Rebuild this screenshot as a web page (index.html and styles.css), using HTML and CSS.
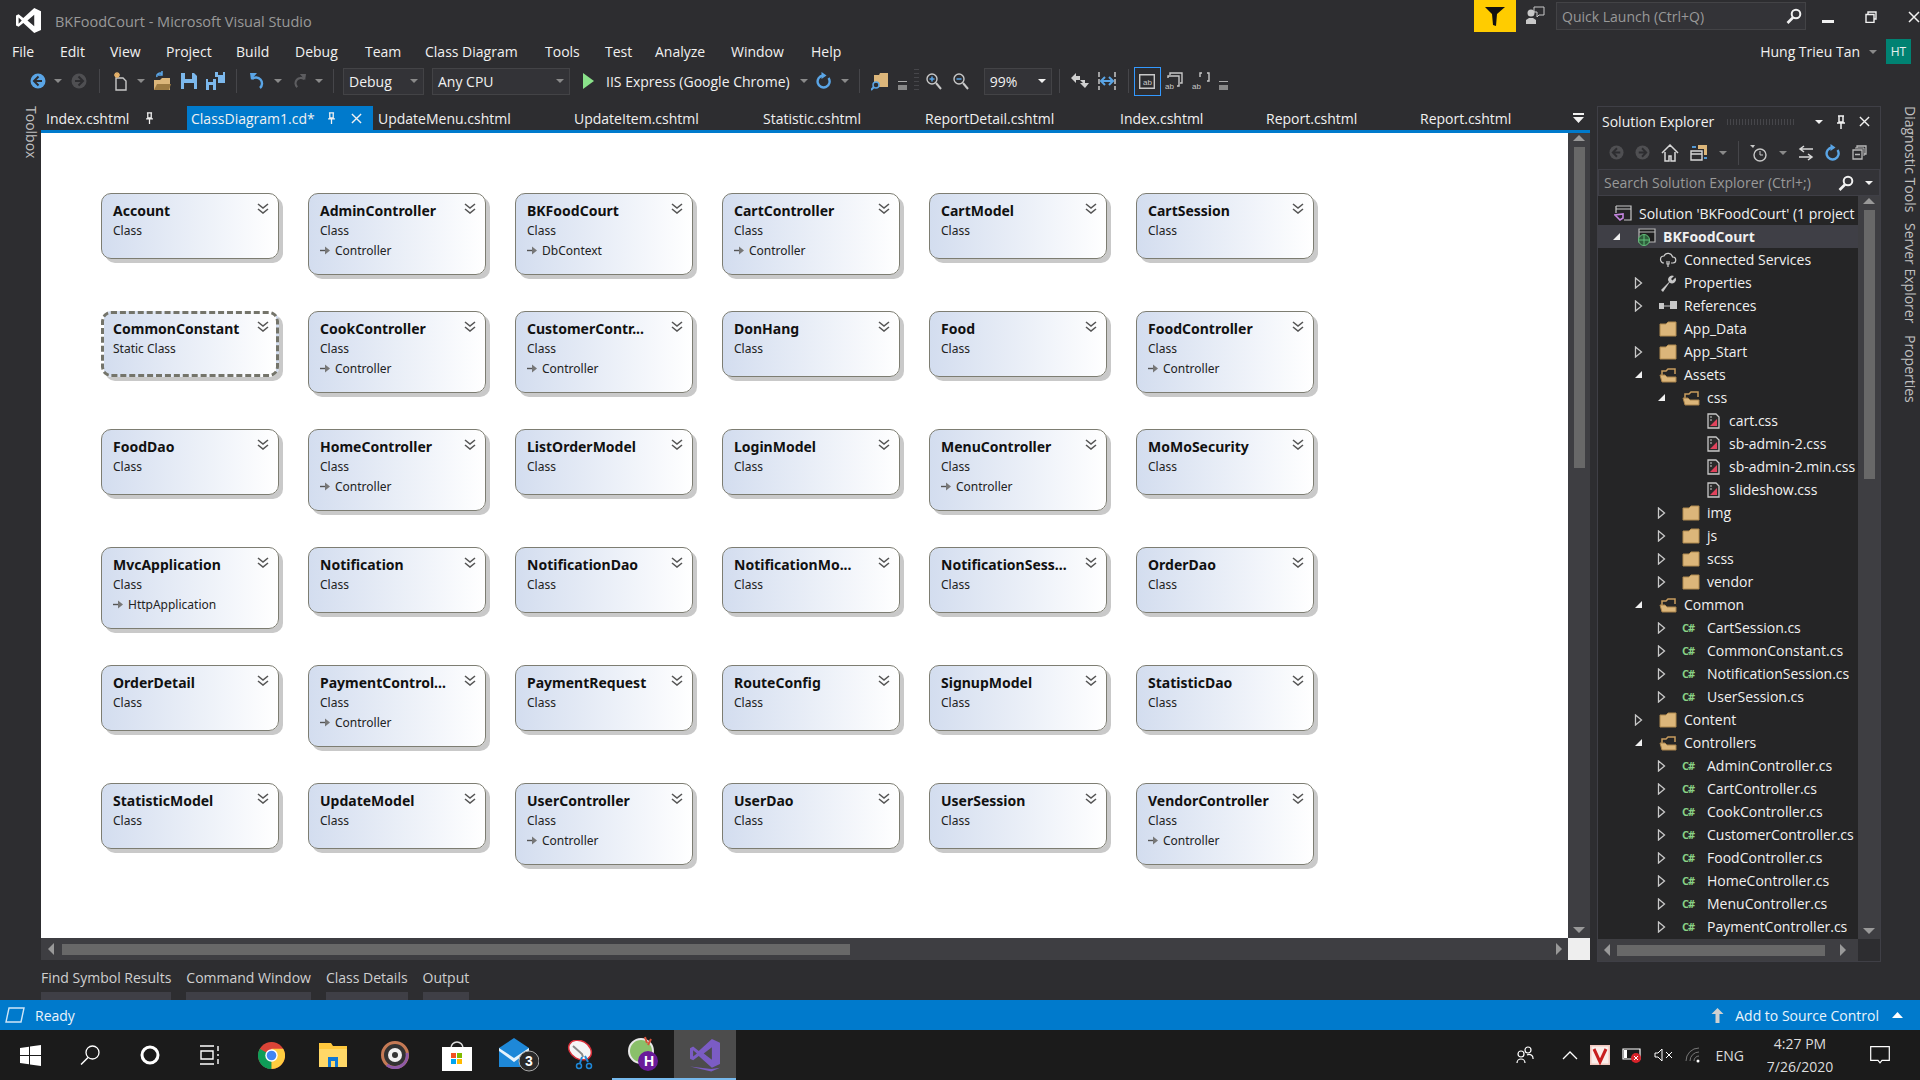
FILE: index.html
```html
<!DOCTYPE html>
<html lang="en">

<head>
    <meta charset="UTF-8">
    <meta name="viewport" content="width=device-width, initial-scale=1.0">
    <title>BKFoodCourt - Microsoft Visual Studio</title>
    <link rel="stylesheet" href="styles.css">
</head>

<body>
    <!-- icon sheet -->
    <svg class="sheet" xmlns="http://www.w3.org/2000/svg">
        <symbol id="vs" viewBox="0 0 24 24"><path fill-rule="evenodd" d="M17.5 0L24 3v18l-6.500 3L7 14.500 2.500 18 0 16.700V7.300L2.500 6 7 9.500zM17.500 6.500L11 12l6.500 5.500zM2.500 9v6l3-3z"/></symbol>
        <symbol id="chev" viewBox="0 0 12 11"><path d="M1 1l5 4 5-4M1 6l5 4 5-4" fill="none" stroke="#555" stroke-width="1.600"/></symbol>
        <symbol id="inh" viewBox="0 0 11 9"><path d="M0 4.500h5" stroke="#555" stroke-width="1.400"/><path d="M5 .5l5 4-5 4z" fill="#777"/></symbol>
        <symbol id="tri-open" viewBox="0 0 8 12"><path d="M1 1l6 5-6 5z" fill="none" stroke="#c8c8c8" stroke-width="1.300"/></symbol>
        <symbol id="tri-down" viewBox="0 0 9 9"><path d="M8 1v7H1z" fill="#f1f1f1"/></symbol>
        <symbol id="folder" viewBox="0 0 18 16"><path d="M1 3h6l2-2h8v14H1z" fill="#dcb67a" stroke="#b08a4e"/></symbol>
        <symbol id="folder-open" viewBox="0 0 18 16"><path d="M3 14V4h4l2-2h7v5" fill="none" stroke="#c79c5e" stroke-width="1.500"/><path d="M1 8h5l2 2h9v5H3z" fill="#dcb67a" stroke="#a8824a"/></symbol>
        <symbol id="css" viewBox="0 0 13 16"><path d="M1 1h8l3 3v11H1z" fill="#2a2a2a" stroke="#c8c8c8" stroke-width="1.300"/><path d="M3 13l7-7v7z" fill="#e0435c"/><path d="M3 4h2M3 7h2" stroke="#c8c8c8"/></symbol>
        <symbol id="back" viewBox="0 0 16 16"><circle cx="8" cy="8" r="7.500" fill="currentColor"/><path d="M8.500 3.500L4 8l4.500 4.500M4.500 8H12" fill="none" stroke="#2d2d30" stroke-width="2"/></symbol>
        <symbol id="fwd" viewBox="0 0 16 16"><circle cx="8" cy="8" r="7.500" fill="currentColor"/><path d="M7.500 3.500L12 8l-4.500 4.500M11.500 8H4" fill="none" stroke="#2d2d30" stroke-width="2"/></symbol>
        <symbol id="refresh" viewBox="0 0 16 18"><path d="M7 3.500a6 6 0 1 0 5.500 2.500" fill="none" stroke="#5aa5e6" stroke-width="2.400"/><path d="M5.500 0l5 3.500-5 3.500z" fill="#5aa5e6"/></symbol>
        <symbol id="search" viewBox="0 0 16 16"><circle cx="10" cy="6" r="4.300" fill="none" stroke="#f1f1f1" stroke-width="2"/><path d="M7 9.500L1.500 15" stroke="#f1f1f1" stroke-width="2.600"/></symbol>
        <symbol id="pin" viewBox="0 0 10 14"><path d="M2 1h6M3 1v6h4V1M1 8h8M5 8v6" fill="none" stroke="#f1f1f1" stroke-width="1.500"/></symbol>
        <symbol id="x" viewBox="0 0 12 12"><path d="M1 1l10 10M11 1L1 11" stroke="#f1f1f1" stroke-width="1.500"/></symbol>
    </svg>

    <div class="ide">
        <header class="titlebar">
            <svg class="logo"><use href="#vs" fill="#fff"/></svg>
            <span class="app-title">BKFoodCourt - Microsoft Visual Studio</span>
            <div class="filter">
                <svg width="22" height="22" viewBox="0 0 22 22"><path d="M1 2h20L13 9l-1 12-3-1-1-11z" fill="#111"/></svg>
            </div>
            <svg class="feedback" width="20" height="20" viewBox="0 0 20 20"><circle cx="6" cy="7" r="3.500" fill="#c8c8c8"/><path d="M1 18v-4l3-2h4l3 2v4z" fill="#c8c8c8"/><path d="M9 1h10v8h-5l-2 2V6H9z" fill="none" stroke="#c8c8c8"/></svg>
            <div class="quick">
                <span>Quick Launch (Ctrl+Q)</span>
                <svg width="16" height="16"><use href="#search"/></svg>
            </div>
            <div class="winbtns">
                <svg width="12" height="12" viewBox="0 0 12 12"><path d="M0 9h12v3H0z" fill="#f1f1f1"/></svg>
                <svg width="12" height="12" viewBox="0 0 12 12"><path d="M3 3V1h8v7H9M1 3.500h8v8H1z" fill="none" stroke="#f1f1f1" stroke-width="1.400"/></svg>
                <svg width="12" height="12"><use href="#x"/></svg>
            </div>
        </header>

        <nav class="menubar">
            <ul class="menu">
                <li>File</li>
                <li>Edit</li>
                <li>View</li>
                <li>Project</li>
                <li>Build</li>
                <li>Debug</li>
                <li>Team</li>
                <li>Class Diagram</li>
                <li>Tools</li>
                <li>Test</li>
                <li>Analyze</li>
                <li>Window</li>
                <li>Help</li>
            </ul>
            <div class="user">
                <span>Hung Trieu Tan</span>
                <i class="drop"></i>
                <b class="avatar">HT</b>
            </div>
        </nav>

        <div class="toolbar">
            <span class="tool"><svg class="blue" width="16" height="16"><use href="#back"/></svg></span>
            <i class="drop slot"></i>
            <span class="tool"><svg class="dim" width="16" height="16"><use href="#fwd"/></svg></span>
            <i class="sep"></i>
            <span class="tool"><svg width="16" height="20" viewBox="0 0 16 20"><path d="M3 7h7l3 3v9H3z" fill="none" stroke="#c8c8c8" stroke-width="1.400"/><path d="M4 1v6M1 4h6M2 2l4 4M6 2L2 6" stroke="#e8b36a" stroke-width="1.300"/></svg></span>
            <i class="drop slot"></i>
            <span class="tool"><svg width="18" height="20" viewBox="0 0 18 20"><path d="M1 19V9h6l2-2h8v12z" fill="#dcb67a"/><path d="M1 19l3-6h14l-2 6z" fill="#9c7a42"/><path d="M4 6a3 3 0 0 1 5-3M9 0v4H5" fill="none" stroke="#5aa5e6" stroke-width="1.500"/></svg></span>
            <span class="tool"><svg width="16" height="16" viewBox="0 0 16 16"><path d="M0 0h13l3 3v13H0z" fill="#7cb8ec"/><path d="M4 0h7v6H4z" fill="#2d2d30"/><path d="M3 10h10v6H3z" fill="#2d2d30"/></svg></span>
            <span class="tool"><svg width="19" height="18" viewBox="0 0 19 18"><path d="M0 7h10v11H0z" fill="#7cb8ec"/><path d="M2 7h5v3H2z" fill="#2d2d30"/><path d="M3 13h4v5H3z" fill="#2d2d30"/><path d="M9 0h10v11h-7V5H9z" fill="#7cb8ec"/><path d="M12 0h5v3h-5z" fill="#2d2d30"/></svg></span>
            <i class="sep"></i>
            <span class="tool"><svg width="16" height="18" viewBox="0 0 16 18"><path d="M2 7a6 6 0 1 1 8 9" fill="none" stroke="#5aa5e6" stroke-width="2.400"/><path d="M0 1l7 0-6 7z" fill="#5aa5e6"/></svg></span>
            <i class="drop slot"></i>
            <span class="tool"><svg class="dim-icon" width="14" height="18" viewBox="0 0 16 18"><path d="M14 7a6 6 0 1 0-8 9" fill="none" stroke="#5d5d60" stroke-width="2.400"/><path d="M16 1H9l6 7z" fill="#5d5d60"/></svg></span>
            <i class="drop slot"></i>
            <i class="sep"></i>
            <div class="combo debug"><span>Debug</span><i class="drop"></i></div>
            <div class="combo cpu"><span>Any CPU</span><i class="drop"></i></div>
            <svg class="play" width="11" height="16" viewBox="0 0 11 16"><path d="M0 0l11 8-11 8z" fill="#8ae28a"/></svg>
            <span class="run">IIS Express (Google Chrome)</span>
            <i class="drop slot"></i>
            <span class="tool"><svg width="16" height="18"><use href="#refresh"/></svg></span>
            <i class="drop slot"></i>
            <i class="sep"></i>
            <span class="tool"><svg width="18" height="19" viewBox="0 0 18 19"><path d="M3 12V3h5l1-2h8v14H8z" fill="#dcb67a"/><circle cx="5" cy="13" r="3" fill="#2d2d30" stroke="#5aa5e6" stroke-width="1.500"/><path d="M3 15l-3 3" stroke="#5aa5e6" stroke-width="2"/></svg></span>
            <i class="overflow"></i>
            <span class="grip"></span>
            <span class="tool"><svg width="16" height="17" viewBox="0 0 16 17"><circle cx="6" cy="6" r="5" fill="none" stroke="#c8c8c8" stroke-width="1.400"/><path d="M3.500 6h5M6 3.500v5" stroke="#5aa5e6" stroke-width="1.500"/><path d="M10 10l5 6" stroke="#c8c8c8" stroke-width="2"/></svg></span>
            <span class="tool"><svg width="16" height="17" viewBox="0 0 16 17"><circle cx="6" cy="6" r="5" fill="none" stroke="#c8c8c8" stroke-width="1.400"/><path d="M3.500 6h5" stroke="#5aa5e6" stroke-width="1.500"/><path d="M10 10l5 6" stroke="#c8c8c8" stroke-width="2"/></svg></span>
            <div class="combo zoom"><span>99%</span><i class="drop light"></i></div>
            <i class="sep"></i>
            <span class="tool"><svg width="18" height="18" viewBox="0 0 18 18"><path d="M0 6l5-5v3h4v4H5v3zM9 8h5v3h4l-4 5-5-5h3z" fill="#d0d0d0"/></svg></span>
            <span class="tool"><svg width="18" height="18" viewBox="0 0 18 18"><path d="M1 0v18M17 0v18" stroke="#c8c8c8" stroke-width="1.500" stroke-dasharray="5 2"/><path d="M4 9h10" stroke="#5aa5e6" stroke-width="2"/><path d="M7 5L3 9l4 4M11 5l4 4-4 4" fill="none" stroke="#5aa5e6" stroke-width="2"/></svg></span>
            <i class="sep"></i>
            <span class="tool-on"><svg width="16" height="15" viewBox="0 0 16 15"><path d="M.7.7h14.600v13.600H.7z" fill="none" stroke="#c8c8c8" stroke-width="1.400"/><text x="4" y="11" class="ab">ab</text></svg></span>
            <span class="tool"><svg width="18" height="18" viewBox="0 0 18 18"><path d="M5 3V1h12v10h-2M3 6V4h11v10h-2" fill="none" stroke="#c8c8c8" stroke-width="1.400"/><text x="0" y="17" class="ab">ab</text></svg></span>
            <span class="tool"><svg width="18" height="18" viewBox="0 0 18 18"><path d="M8 5V1h2M15 1h2v8h-2" fill="none" stroke="#c8c8c8" stroke-width="1.400"/><text x="0" y="17" class="ab">ab</text></svg></span>
            <i class="overflow"></i>
        </div>

        <main class="workspace">
            <aside class="rail left-rail">
                <span class="side-tab">Toolbox</span>
            </aside>

            <section class="center">
                <div class="tabs">
                    <div class="tab">Index.cshtml<svg class="tab-pin" width="9" height="12"><use href="#pin"/></svg></div>
                    <div class="tab active">ClassDiagram1.cd*<svg class="tab-pin" width="9" height="12"><use href="#pin"/></svg><svg width="11" height="11"><use href="#x"/></svg></div>
                    <div class="tab">UpdateMenu.cshtml</div>
                    <div class="tab">UpdateItem.cshtml</div>
                    <div class="tab">Statistic.cshtml</div>
                    <div class="tab">ReportDetail.cshtml</div>
                    <div class="tab">Index.cshtml</div>
                    <div class="tab">Report.cshtml</div>
                    <div class="tab">Report.cshtml</div>
                    <svg class="tabs-more" width="11" height="10" viewBox="0 0 11 10"><path d="M0 0h11v2H0zM0 4h11L5.500 10z" fill="#f1f1f1"/></svg>
                </div>

                <div class="editor">
                    <div class="canvas">
                        <div class="card short"><h4>Account</h4><p>Class</p><svg class="chev"><use href="#chev"/></svg></div>
                        <div class="card"><h4>AdminController</h4><p>Class</p><p class="base"><svg><use href="#inh"/></svg>Controller</p><svg class="chev"><use href="#chev"/></svg></div>
                        <div class="card"><h4>BKFoodCourt</h4><p>Class</p><p class="base"><svg><use href="#inh"/></svg>DbContext</p><svg class="chev"><use href="#chev"/></svg></div>
                        <div class="card"><h4>CartController</h4><p>Class</p><p class="base"><svg><use href="#inh"/></svg>Controller</p><svg class="chev"><use href="#chev"/></svg></div>
                        <div class="card short"><h4>CartModel</h4><p>Class</p><svg class="chev"><use href="#chev"/></svg></div>
                        <div class="card short"><h4>CartSession</h4><p>Class</p><svg class="chev"><use href="#chev"/></svg></div>

                        <div class="card short picked"><h4>CommonConstant</h4><p>Static Class</p><svg class="chev"><use href="#chev"/></svg></div>
                        <div class="card"><h4>CookController</h4><p>Class</p><p class="base"><svg><use href="#inh"/></svg>Controller</p><svg class="chev"><use href="#chev"/></svg></div>
                        <div class="card"><h4>CustomerContr...</h4><p>Class</p><p class="base"><svg><use href="#inh"/></svg>Controller</p><svg class="chev"><use href="#chev"/></svg></div>
                        <div class="card short"><h4>DonHang</h4><p>Class</p><svg class="chev"><use href="#chev"/></svg></div>
                        <div class="card short"><h4>Food</h4><p>Class</p><svg class="chev"><use href="#chev"/></svg></div>
                        <div class="card"><h4>FoodController</h4><p>Class</p><p class="base"><svg><use href="#inh"/></svg>Controller</p><svg class="chev"><use href="#chev"/></svg></div>

                        <div class="card short"><h4>FoodDao</h4><p>Class</p><svg class="chev"><use href="#chev"/></svg></div>
                        <div class="card"><h4>HomeController</h4><p>Class</p><p class="base"><svg><use href="#inh"/></svg>Controller</p><svg class="chev"><use href="#chev"/></svg></div>
                        <div class="card short"><h4>ListOrderModel</h4><p>Class</p><svg class="chev"><use href="#chev"/></svg></div>
                        <div class="card short"><h4>LoginModel</h4><p>Class</p><svg class="chev"><use href="#chev"/></svg></div>
                        <div class="card"><h4>MenuController</h4><p>Class</p><p class="base"><svg><use href="#inh"/></svg>Controller</p><svg class="chev"><use href="#chev"/></svg></div>
                        <div class="card short"><h4>MoMoSecurity</h4><p>Class</p><svg class="chev"><use href="#chev"/></svg></div>

                        <div class="card"><h4>MvcApplication</h4><p>Class</p><p class="base"><svg><use href="#inh"/></svg>HttpApplication</p><svg class="chev"><use href="#chev"/></svg></div>
                        <div class="card short"><h4>Notification</h4><p>Class</p><svg class="chev"><use href="#chev"/></svg></div>
                        <div class="card short"><h4>NotificationDao</h4><p>Class</p><svg class="chev"><use href="#chev"/></svg></div>
                        <div class="card short"><h4>NotificationMo...</h4><p>Class</p><svg class="chev"><use href="#chev"/></svg></div>
                        <div class="card short"><h4>NotificationSess...</h4><p>Class</p><svg class="chev"><use href="#chev"/></svg></div>
                        <div class="card short"><h4>OrderDao</h4><p>Class</p><svg class="chev"><use href="#chev"/></svg></div>

                        <div class="card short"><h4>OrderDetail</h4><p>Class</p><svg class="chev"><use href="#chev"/></svg></div>
                        <div class="card"><h4>PaymentControl...</h4><p>Class</p><p class="base"><svg><use href="#inh"/></svg>Controller</p><svg class="chev"><use href="#chev"/></svg></div>
                        <div class="card short"><h4>PaymentRequest</h4><p>Class</p><svg class="chev"><use href="#chev"/></svg></div>
                        <div class="card short"><h4>RouteConfig</h4><p>Class</p><svg class="chev"><use href="#chev"/></svg></div>
                        <div class="card short"><h4>SignupModel</h4><p>Class</p><svg class="chev"><use href="#chev"/></svg></div>
                        <div class="card short"><h4>StatisticDao</h4><p>Class</p><svg class="chev"><use href="#chev"/></svg></div>

                        <div class="card short"><h4>StatisticModel</h4><p>Class</p><svg class="chev"><use href="#chev"/></svg></div>
                        <div class="card short"><h4>UpdateModel</h4><p>Class</p><svg class="chev"><use href="#chev"/></svg></div>
                        <div class="card"><h4>UserController</h4><p>Class</p><p class="base"><svg><use href="#inh"/></svg>Controller</p><svg class="chev"><use href="#chev"/></svg></div>
                        <div class="card short"><h4>UserDao</h4><p>Class</p><svg class="chev"><use href="#chev"/></svg></div>
                        <div class="card short"><h4>UserSession</h4><p>Class</p><svg class="chev"><use href="#chev"/></svg></div>
                        <div class="card"><h4>VendorController</h4><p>Class</p><p class="base"><svg><use href="#inh"/></svg>Controller</p><svg class="chev"><use href="#chev"/></svg></div>
                    </div>
                    <div class="vscroll editor-v">
                        <i class="arr-up"></i>
                        <span class="thumb"></span>
                        <i class="arr-down"></i>
                    </div>
                </div>

                <div class="hscroll editor-h">
                    <i class="arr-left"></i>
                    <span class="hthumb"></span>
                    <i class="arr-right"></i>
                    <span class="corner"></span>
                </div>

                <div class="bottom-tabs">
                    <div class="btab">Find Symbol Results</div>
                    <div class="btab">Command Window</div>
                    <div class="btab">Class Details</div>
                    <div class="btab">Output</div>
                </div>
            </section>

            <section class="explorer-wrap">
                <div class="explorer">
                    <div class="ex-title">
                        <span>Solution Explorer</span>
                        <span class="ex-grip"></span>
                        <i class="drop light"></i>
                        <svg width="10" height="14"><use href="#pin"/></svg>
                        <svg width="11" height="11"><use href="#x"/></svg>
                    </div>
                    <div class="ex-tools">
                        <svg class="dim" width="15" height="15"><use href="#back"/></svg>
                        <svg class="dim" width="15" height="15"><use href="#fwd"/></svg>
                        <svg width="18" height="18" viewBox="0 0 18 18"><path d="M1 9l8-8 8 8M4 8v9h4v-5h2v5h4V8" fill="none" stroke="#d8d8d8" stroke-width="1.500"/></svg>
                        <svg width="18" height="18" viewBox="0 0 18 18"><path d="M1 7h11v9H1zM1 10h11" fill="none" stroke="#d8d8d8" stroke-width="1.400"/><path d="M8 1h9v10h-3V5H8z" fill="#dcb67a"/><path d="M2 3h4" stroke="#5aa5e6" stroke-width="1.800"/><path d="M14 14h3" stroke="#5aa5e6" stroke-width="1.800"/></svg>
                        <i class="drop"></i>
                        <i class="sep"></i>
                        <svg width="18" height="18" viewBox="0 0 18 18"><circle cx="10" cy="11" r="6" fill="none" stroke="#c8c8c8" stroke-width="1.400"/><path d="M10 7v4h3" fill="none" stroke="#c8c8c8"/><path d="M0 1h5L3 4z" fill="#c8c8c8"/></svg>
                        <i class="drop"></i>
                        <svg width="16" height="16" viewBox="0 0 16 16"><path d="M15 4H3M6 1L2 4l4 3M1 12h12M10 9l4 3-4 3" fill="none" stroke="#d8d8d8" stroke-width="1.500"/></svg>
                        <svg width="16" height="18"><use href="#refresh"/></svg>
                        <svg width="15" height="15" viewBox="0 0 15 15"><path d="M5 3V1h9v8h-2M1 5h9v9H1zM3 9.500h5" fill="none" stroke="#b8b8b8" stroke-width="1.300"/><path d="M3 3h9v8" fill="none" stroke="#b8b8b8"/></svg>
                    </div>
                    <div class="ex-search">
                        <span>Search Solution Explorer (Ctrl+;)</span>
                        <svg width="16" height="16"><use href="#search"/></svg>
                        <i class="drop light"></i>
                    </div>
                    <div class="ex-body">
                        <div class="tree">
                            <div class="row sol"><svg class="ico" width="18" height="18" viewBox="0 0 18 18"><path d="M2 1h15v14H10M2 1v7M2 4h15" fill="none" stroke="#c8c8c8" stroke-width="1.200"/><path d="M1 10l5 5 3-2v-4z" fill="none" stroke="#c586e0" stroke-width="1.600"/></svg><span>Solution 'BKFoodCourt' (1 project</span></div>
                            <div class="row proj"><svg class="tri" width="9" height="9"><use href="#tri-down"/></svg><svg class="ico" width="19" height="18" viewBox="0 0 19 18"><path d="M2 1h16v13H2z" fill="#1e1e1e" stroke="#b8b8b8" stroke-width="1.200"/><path d="M2 4h16" stroke="#b8b8b8"/><circle cx="7" cy="12" r="5.500" fill="#2d5d3a" stroke="#63c07a"/><path d="M2 12h10M7 7v10" stroke="#63c07a"/></svg><b>BKFoodCourt</b></div>
                            <div class="row lv1 noarrow"><svg class="ico" width="18" height="16" viewBox="0 0 18 16"><path d="M5 11a3.500 3.500 0 0 1 0-7 4.500 4.500 0 0 1 8.500 1A3 3 0 0 1 14 11h-2M8 9v3h2V9M9 12v3" fill="none" stroke="#d0d0d0" stroke-width="1.200"/></svg><span>Connected Services</span></div>
                            <div class="row lv1"><svg class="tri" width="8" height="12"><use href="#tri-open"/></svg><svg class="ico" width="18" height="18" viewBox="0 0 18 18"><path d="M2 16L10 8a4 4 0 0 1 5-6l-3 3 1.500 1.500 3-3a4 4 0 0 1-6 5L4 18z" fill="#c8c8c8"/></svg><span>Properties</span></div>
                            <div class="row lv1"><svg class="tri" width="8" height="12"><use href="#tri-open"/></svg><svg class="ico" width="18" height="10" viewBox="0 0 18 10"><path d="M0 2h5v6H0zM11 0h7v8h-7z" fill="#c8c8c8"/><path d="M5 5h6" stroke="#c8c8c8"/></svg><span>References</span></div>
                            <div class="row lv1 noarrow"><svg class="ico" width="18" height="16"><use href="#folder"/></svg><span>App_Data</span></div>
                            <div class="row lv1"><svg class="tri" width="8" height="12"><use href="#tri-open"/></svg><svg class="ico" width="18" height="16"><use href="#folder"/></svg><span>App_Start</span></div>
                            <div class="row lv1"><svg class="tri" width="9" height="9"><use href="#tri-down"/></svg><svg class="ico" width="18" height="16"><use href="#folder-open"/></svg><span>Assets</span></div>
                            <div class="row lv2"><svg class="tri" width="9" height="9"><use href="#tri-down"/></svg><svg class="ico" width="18" height="16"><use href="#folder-open"/></svg><span>css</span></div>
                            <div class="row lv3"><svg class="ico" width="13" height="16"><use href="#css"/></svg><span>cart.css</span></div>
                            <div class="row lv3"><svg class="ico" width="13" height="16"><use href="#css"/></svg><span>sb-admin-2.css</span></div>
                            <div class="row lv3"><svg class="ico" width="13" height="16"><use href="#css"/></svg><span>sb-admin-2.min.css</span></div>
                            <div class="row lv3"><svg class="ico" width="13" height="16"><use href="#css"/></svg><span>slideshow.css</span></div>
                            <div class="row lv2"><svg class="tri" width="8" height="12"><use href="#tri-open"/></svg><svg class="ico" width="18" height="16"><use href="#folder"/></svg><span>img</span></div>
                            <div class="row lv2"><svg class="tri" width="8" height="12"><use href="#tri-open"/></svg><svg class="ico" width="18" height="16"><use href="#folder"/></svg><span>js</span></div>
                            <div class="row lv2"><svg class="tri" width="8" height="12"><use href="#tri-open"/></svg><svg class="ico" width="18" height="16"><use href="#folder"/></svg><span>scss</span></div>
                            <div class="row lv2"><svg class="tri" width="8" height="12"><use href="#tri-open"/></svg><svg class="ico" width="18" height="16"><use href="#folder"/></svg><span>vendor</span></div>
                            <div class="row lv1"><svg class="tri" width="9" height="9"><use href="#tri-down"/></svg><svg class="ico" width="18" height="16"><use href="#folder-open"/></svg><span>Common</span></div>
                            <div class="row lv2"><svg class="tri" width="8" height="12"><use href="#tri-open"/></svg><em class="cs">C#</em><span>CartSession.cs</span></div>
                            <div class="row lv2"><svg class="tri" width="8" height="12"><use href="#tri-open"/></svg><em class="cs">C#</em><span>CommonConstant.cs</span></div>
                            <div class="row lv2"><svg class="tri" width="8" height="12"><use href="#tri-open"/></svg><em class="cs">C#</em><span>NotificationSession.cs</span></div>
                            <div class="row lv2"><svg class="tri" width="8" height="12"><use href="#tri-open"/></svg><em class="cs">C#</em><span>UserSession.cs</span></div>
                            <div class="row lv1"><svg class="tri" width="8" height="12"><use href="#tri-open"/></svg><svg class="ico" width="18" height="16"><use href="#folder"/></svg><span>Content</span></div>
                            <div class="row lv1"><svg class="tri" width="9" height="9"><use href="#tri-down"/></svg><svg class="ico" width="18" height="16"><use href="#folder-open"/></svg><span>Controllers</span></div>
                            <div class="row lv2"><svg class="tri" width="8" height="12"><use href="#tri-open"/></svg><em class="cs">C#</em><span>AdminController.cs</span></div>
                            <div class="row lv2"><svg class="tri" width="8" height="12"><use href="#tri-open"/></svg><em class="cs">C#</em><span>CartController.cs</span></div>
                            <div class="row lv2"><svg class="tri" width="8" height="12"><use href="#tri-open"/></svg><em class="cs">C#</em><span>CookController.cs</span></div>
                            <div class="row lv2"><svg class="tri" width="8" height="12"><use href="#tri-open"/></svg><em class="cs">C#</em><span>CustomerController.cs</span></div>
                            <div class="row lv2"><svg class="tri" width="8" height="12"><use href="#tri-open"/></svg><em class="cs">C#</em><span>FoodController.cs</span></div>
                            <div class="row lv2"><svg class="tri" width="8" height="12"><use href="#tri-open"/></svg><em class="cs">C#</em><span>HomeController.cs</span></div>
                            <div class="row lv2"><svg class="tri" width="8" height="12"><use href="#tri-open"/></svg><em class="cs">C#</em><span>MenuController.cs</span></div>
                            <div class="row lv2"><svg class="tri" width="8" height="12"><use href="#tri-open"/></svg><em class="cs">C#</em><span>PaymentController.cs</span></div>
                        </div>
                        <div class="vscroll ex-v">
                            <i class="arr-up"></i>
                            <span class="thumb"></span>
                            <i class="arr-down"></i>
                        </div>
                    </div>
                    <div class="hscroll ex-h">
                        <i class="arr-left"></i>
                        <span class="hthumb"></span>
                        <i class="arr-right"></i>
                    </div>
                </div>
            </section>

            <aside class="rail right-rail">
                <span class="side-tab">Diagnostic Tools</span>
                <span class="side-tab">Server Explorer</span>
                <span class="side-tab">Properties</span>
            </aside>
        </main>

        <footer class="statusbar">
            <svg width="20" height="16" viewBox="0 0 20 16"><path d="M4 1h15l-3 14H1z" fill="none" stroke="#cfe6f7" stroke-width="1.400"/></svg>
            <span class="ready">Ready</span>
            <svg class="up" width="13" height="15" viewBox="0 0 13 15"><path d="M6.500 0l6 6H8.500v9h-4V6H.5z" fill="#d0d0d0"/></svg>
            <span>Add to Source Control</span>
            <svg class="caret" width="11" height="6" viewBox="0 0 11 6"><path d="M5.500 0l5.500 6H0z" fill="#fff"/></svg>
        </footer>
    </div>

    <div class="taskbar">
        <span class="task"><svg width="21" height="21" viewBox="0 0 21 21"><path d="M0 3l9-1.300V10H0zM10 1.500L21 0v10H10zM0 11h9v8.300L0 18zM10 11h11v10l-11-1.500z" fill="#fff"/></svg></span>
        <span class="task"><svg width="20" height="20" viewBox="0 0 20 20"><circle cx="12.500" cy="7.500" r="6.500" fill="none" stroke="#fff" stroke-width="1.300"/><path d="M8 12.500L1 19.500" stroke="#fff" stroke-width="1.500"/></svg></span>
        <span class="task"><svg width="20" height="20" viewBox="0 0 20 20"><circle cx="10" cy="10" r="8" fill="none" stroke="#fff" stroke-width="3"/></svg></span>
        <span class="task"><svg width="20" height="20" viewBox="0 0 20 20"><path d="M0 1h14M0 19h14M1 6h12v8H1zM18 1v5M18 9v2M18 14v5" fill="none" stroke="#fff" stroke-width="1.400"/></svg></span>
        <span class="task app"><svg width="27" height="27" viewBox="0 0 27 27"><circle cx="13.500" cy="13.500" r="13.500" fill="#db4437"/><path d="M13.500 13.500L1.800 20.250A13.500 13.500 0 0 0 13.500 27z" fill="#0f9d58"/><path d="M1.800 20.250A13.500 13.500 0 0 1 1.800 6.750L13.500 13.500 13.500 27A13.500 13.500 0 0 1 1.800 20.250z" fill="#0f9d58"/><path d="M13.500 27A13.500 13.500 0 0 0 25.200 6.750H13.500z" fill="#ffcd40"/><circle cx="13.500" cy="13.500" r="6.200" fill="#fff"/><circle cx="13.500" cy="13.500" r="4.800" fill="#4285f4"/></svg></span>
        <span class="task app"><svg width="28" height="24" viewBox="0 0 28 24"><path d="M0 0h12l2 3h14v21H0z" fill="#ffc83d"/><path d="M0 6h28v18H0z" fill="#ffd867"/><path d="M9 14h10v10h-3v-6h-4v6H9z" fill="#0f78d4"/></svg></span>
        <span class="task app"><svg width="28" height="28" viewBox="0 0 28 28"><circle cx="14" cy="14" r="12.500" fill="#333" stroke="#c57a55" stroke-width="3"/><circle cx="14" cy="14" r="7" fill="#f1f1f1"/><circle cx="14" cy="14" r="3" fill="#333"/><path d="M6 24a12.500 12.500 0 0 0 20-12" fill="none" stroke="#8e5aa8" stroke-width="3"/></svg></span>
        <span class="task app"><svg width="30" height="31" viewBox="0 0 30 31"><path d="M9 8a6 6 0 0 1 12 0" fill="none" stroke="#ddd" stroke-width="1.600"/><path d="M0 7h30v24H0z" fill="#fff"/><path d="M9 13h5v5H9z" fill="#f25022"/><path d="M15 13h5v5h-5z" fill="#7fba00"/><path d="M9 19h5v5H9z" fill="#00a4ef"/><path d="M15 19h5v5h-5z" fill="#ffb900"/></svg></span>
        <span class="task app"><svg width="40" height="34" viewBox="0 0 40 34"><path d="M0 10L15 0l15 10v19H0z" fill="#1e88d8"/><path d="M0 10l15 10 15-10v3L15 24 0 13z" fill="#e8f4fc"/><circle cx="30" cy="23" r="10" fill="#2a2a2a" stroke="#aaa"/><text x="26" y="28" class="badge-num">3</text></svg></span>
        <span class="task app"><svg width="28" height="30" viewBox="0 0 28 30"><ellipse cx="13" cy="10" rx="12" ry="9" transform="rotate(30 13 10)" fill="#f5f5f5" stroke="#d9303a" stroke-width="1.500"/><path d="M6 6l9 8 1 3" stroke="#888" stroke-width="2" fill="none"/><path d="M18 16l3 6M15 17l-2 6" stroke="#1e88d8" stroke-width="2"/><circle cx="22" cy="26" r="2.500" fill="none" stroke="#1e88d8" stroke-width="1.500"/><circle cx="12" cy="26" r="2.500" fill="none" stroke="#1e88d8" stroke-width="1.500"/></svg></span>
        <span class="task app open"><svg width="30" height="36" viewBox="0 0 30 36"><circle cx="13" cy="15" r="12" fill="#8ac06a" stroke="#e8e8e8" stroke-width="2"/><path d="M17 1l2 6M23 3l-3 6" stroke="#d9503a" stroke-width="2"/><circle cx="20" cy="25" r="10" fill="#6a1b9a"/><text x="16" y="30" class="badge-h">H</text></svg></span>
        <span class="task app vs-task open"><svg width="30" height="36" viewBox="0 0 24 28"><path fill-rule="evenodd" fill="#7b5cc4" d="M17.500 2L24 5v17l-6.500 3L7 15.500 2.500 19 0 17.700V9.300L2.500 8 7 11.500zM17.500 8.500L11 13.500l6.500 5zM2.500 11v5l3-2.500zM0 24l17 4 7-3-7 1z"/></svg></span>
        <div class="tray">
            <svg width="18" height="18" viewBox="0 0 18 18"><circle cx="12" cy="4" r="3" fill="none" stroke="#fff" stroke-width="1.200"/><circle cx="5" cy="8" r="3" fill="none" stroke="#fff" stroke-width="1.200"/><path d="M1 17a4 4 0 0 1 8 0M11 9a4 4 0 0 1 6 4" fill="none" stroke="#fff" stroke-width="1.200"/></svg>
            <svg class="tray-up" width="16" height="9" viewBox="0 0 16 9"><path d="M1 8l7-7 7 7" fill="none" stroke="#fff" stroke-width="1.300"/></svg>
            <svg width="20" height="20" viewBox="0 0 20 20"><path d="M0 0h20v20H0z" fill="#f0c8c0"/><path d="M1.500 1.500h17v17h-17z" fill="#fbeeea"/><path d="M4 4l6 13 6-13" fill="none" stroke="#c81e1e" stroke-width="3"/></svg>
            <svg width="20" height="18" viewBox="0 0 20 18"><path d="M1 3h17v10H1z" fill="none" stroke="#fff" stroke-width="1.200"/><path d="M2 4h3v8H2z" fill="#fff"/><circle cx="14" cy="12" r="5" fill="#d8232a"/><path d="M12 10l4 4M16 10l-4 4" stroke="#fff"/></svg>
            <svg width="19" height="14" viewBox="0 0 19 14"><path d="M1 5h3l4-4v12l-4-4H1z" fill="none" stroke="#fff"/><path d="M12 4l6 6M18 4l-6 6" stroke="#fff"/></svg>
            <svg width="16" height="16" viewBox="0 0 16 16"><path d="M1 14a13 13 0 0 1 13-13M5 14a9 9 0 0 1 9-9M9 14a5 5 0 0 1 5-5" fill="none" stroke="#777"/><circle cx="13" cy="14" r="1.500" fill="#fff"/></svg>
            <span class="lang">ENG</span>
            <div class="clock"><span>4:27 PM</span><span>7/26/2020</span></div>
            <svg class="notif" width="20" height="18" viewBox="0 0 20 18"><path d="M.7.7h18.600v13.600H12l-2 2.500-2-2.500H.7z" fill="none" stroke="#fff" stroke-width="1.200"/></svg>
        </div>
    </div>
</body>

</html>
```

FILE: styles.css
```css
* {
    margin: 0;
    padding: 0;
    box-sizing: border-box;
}

body {
    display: flex;
    flex-direction: column;
    width: 1920px;
    height: 1080px;
    overflow: hidden;
    background-color: #2d2d30;
    color: #f1f1f1;
    font-family: "Open Sans", "Liberation Sans", sans-serif;
    font-size: 14px;
}

li {
    list-style: none;
}

i,
em {
    font-style: normal;
}

svg {
    flex: none;
}

.sheet {
    display: none;
}

.ide {
    display: flex;
    flex-direction: column;
    height: 1030px;
}

/* title bar */
.titlebar {
    display: flex;
    align-items: flex-start;
    height: 40px;
}

.logo {
    width: 25px;
    height: 25px;
    margin: 8px 0 0 16px;
}

.app-title {
    flex: 1;
    margin: 12px 0 0 14px;
    color: #999;
    font-size: 14.5px;
}

.filter {
    display: flex;
    justify-content: center;
    align-items: center;
    width: 42px;
    height: 32px;
    background-color: #ffcc00;
}

.feedback {
    margin: 6px 11px 0 9px;
}

.quick {
    display: flex;
    justify-content: space-between;
    align-items: center;
    width: 250px;
    height: 28px;
    margin-top: 2px;
    padding: 0 3px 0 5px;
    background-color: #333337;
    border: 1px solid #434346;
    color: #999;
}

.winbtns {
    display: flex;
    gap: 31px;
    margin: 11px 0 0 16px;
}

/* menu */
.menubar {
    display: flex;
    justify-content: space-between;
    height: 25px;
}

.menu {
    display: grid;
    grid-template-columns: 48px 50px 56px 70px 59px 70px 60px 120px 60px 50px 76px 80px 50px;
    padding-left: 12px;
    line-height: 24px;
}

.user {
    display: flex;
    align-items: center;
    gap: 9px;
    height: 25px;
    margin-top: -1px;
    padding-right: 9px;
}

.avatar {
    width: 25px;
    height: 25px;
    background-color: #008272;
    color: #e8f0ee;
    font-size: 12px;
    font-weight: 400;
    line-height: 25px;
    text-align: center;
}

.drop {
    display: block;
    width: 0;
    height: 0;
    border-left: 4px solid transparent;
    border-right: 4px solid transparent;
    border-top: 4px solid #8a8a8a;
}

.drop.light {
    border-top-color: #f1f1f1;
}

/* tool bar */
.toolbar {
    display: flex;
    align-items: center;
    height: 32px;
    margin-bottom: 9px;
    padding-left: 24px;
}

.tool {
    display: flex;
    justify-content: center;
    align-items: center;
    width: 27px;
    height: 30px;
}

.drop.slot {
    margin: 0 3px;
}

.sep {
    display: block;
    width: 1px;
    height: 24px;
    margin: 0 7px;
    background-color: #46464a;
}

.blue {
    color: #5aa5e6;
}

.dim {
    color: #4f4f52;
}

.overflow {
    display: block;
    width: 9px;
    height: 9px;
    margin: 8px 4px 0;
    border-top: 1px solid #aaa;
    border-bottom: 5px solid #888;
}

.grip {
    width: 5px;
    height: 24px;
    margin: 0 2px 0 3px;
    background: repeating-linear-gradient(#46464a 0 1px, transparent 1px 4px);
}

.combo {
    display: flex;
    justify-content: space-between;
    align-items: center;
    height: 27px;
    padding: 0 5px;
    background-color: #333337;
    border: 1px solid #434346;
}

.debug {
    width: 81px;
    margin-left: 2px;
}

.cpu {
    width: 138px;
    margin: 0 13px 0 8px;
}

.zoom {
    width: 68px;
    margin-left: 9px;
}

.run {
    margin: 0 7px 0 12px;
}

.tool-on {
    display: flex;
    justify-content: center;
    align-items: center;
    width: 27px;
    height: 29px;
    margin-left: -2px;
    border: 1px solid #3399ff;
}

.ab {
    fill: #c8c8c8;
    font-family: "Liberation Sans", sans-serif;
    font-size: 8px;
}

/* work area */
.workspace {
    display: flex;
    flex: 1;
    min-height: 0;
}

.rail {
    display: flex;
    flex-direction: column;
    flex: none;
}

.left-rail {
    width: 41px;
    padding-left: 9px;
}

.right-rail {
    width: 39px;
    gap: 11px;
    padding-left: 7px;
}

.side-tab {
    height: max-content;
    writing-mode: vertical-rl;
    color: #c0c0c0;
    font-size: 14px;
    line-height: 20px;
}

.left-rail .side-tab {
    margin-top: 0;
}

.center {
    display: flex;
    flex-direction: column;
    width: 1556px;
}

.tabs {
    display: grid;
    grid-template-columns: 146px 186px 196px 189px 162px 195px 146px 154px 1fr 24px;
    align-items: center;
    width: 1549px;
    height: 27px;
    border-bottom: 3px solid #007acc;
}

.tab {
    display: flex;
    align-items: center;
    height: 24px;
    padding-left: 5px;
}

.tab-pin {
    margin-left: 16px;
}

.tab.active {
    padding-left: 4px;
    background-color: #007acc;
}

.tab.active .tab-pin {
    margin: 0 15px 0 12px;
}

.tabs-more {
    justify-self: center;
}

.editor {
    display: flex;
    flex: 1;
    min-height: 0;
}

.canvas {
    display: grid;
    grid-template-columns: repeat(6, 178px);
    grid-auto-rows: 118px;
    column-gap: 29px;
    align-items: start;
    width: 1527px;
    padding: 60px 0 0 60px;
    background-color: #fff;
}

.card {
    position: relative;
    height: 82px;
    padding: 7px 11px;
    background: linear-gradient(to right, #d3ddef, #fff);
    border: 1px solid #7d7d72;
    border-radius: 10px;
    box-shadow: 4px 4px 0 #c9c9c9;
    color: #222;
    font-family: "Noto Sans", sans-serif;
    font-size: 12px;
    line-height: 20px;
}

.card.short {
    height: 66px;
}

.card.picked {
    border: 3px dashed #74746a;
    padding: 5px 9px;
}

.card h4 {
    color: #111;
    font-size: 14px;
    font-weight: 700;
    line-height: 20px;
    white-space: nowrap;
}

.base svg {
    width: 11px;
    height: 9px;
    margin-right: 4px;
}

.chev {
    position: absolute;
    top: 9px;
    right: 9px;
    width: 12px;
    height: 11px;
}

.picked .chev {
    top: 7px;
    right: 7px;
}

/* scroll bars */
.vscroll {
    display: flex;
    flex-direction: column;
    align-items: center;
    background-color: #3e3e42;
}

.editor-v {
    width: 22px;
}

.thumb {
    width: 11px;
    margin: 6px 0;
    background-color: #686868;
}

.editor-v .thumb {
    height: 321px;
}

.arr-up,
.arr-down,
.arr-left,
.arr-right {
    display: block;
    width: 0;
    height: 0;
    flex: none;
    border: 5px solid transparent;
}

.arr-up {
    margin-top: 2px;
    border-top: 0;
    border-bottom: 6px solid #999;
    border-left-width: 6px;
    border-right-width: 6px;
}

.arr-down {
    margin-top: auto;
    margin-bottom: 5px;
    border-bottom: 0;
    border-top: 6px solid #999;
    border-left-width: 6px;
    border-right-width: 6px;
}

.arr-left {
    border-left: 0;
    border-right: 6px solid #999;
    border-top-width: 6px;
    border-bottom-width: 6px;
}

.arr-right {
    border-right: 0;
    border-left: 6px solid #999;
    border-top-width: 6px;
    border-bottom-width: 6px;
}

.hscroll {
    display: flex;
    align-items: center;
    flex: none;
    height: 22px;
    background-color: #3e3e42;
}

.editor-h {
    width: 1549px;
    padding-left: 7px;
}

.hthumb {
    height: 11px;
    background-color: #686868;
}

.editor-h .hthumb {
    width: 788px;
    margin-left: 8px;
}

.editor-h .arr-right {
    margin-left: auto;
    margin-right: 6px;
}

.corner {
    align-self: stretch;
    width: 22px;
    background-color: #eee;
}

/* bottom tool window tabs */
.bottom-tabs {
    display: flex;
    align-items: flex-end;
    flex: none;
    gap: 15px;
    height: 40px;
    padding-left: 0;
}

.btab {
    height: 40px;
    padding-top: 8px;
    border-bottom: 8px solid #3f3f46;
    color: #d0d0d0;
    line-height: 20px;
}

/* solution explorer */
.explorer-wrap {
    width: 284px;
}

.explorer {
    display: flex;
    flex-direction: column;
    height: 856px;
    border: 1px solid #3f3f46;
}

.ex-title {
    display: flex;
    align-items: center;
    gap: 13px;
    height: 29px;
    padding: 0 10px 0 4px;
}

.ex-grip {
    flex: 1;
    height: 6px;
    margin: 0 6px 0 0;
    background: repeating-linear-gradient(90deg, #46464a 0 1px, transparent 1px 3px);
}

.ex-tools {
    display: flex;
    align-items: center;
    gap: 11px;
    height: 33px;
    padding: 0 0 0 11px;
}

.ex-tools .sep {
    margin: 0;
}

.ex-search {
    display: flex;
    align-items: center;
    height: 27px;
    padding-left: 5px;
    background-color: #333337;
    border: 1px solid #3f3f46;
    color: #999;
}

.ex-search span {
    flex: 1;
    white-space: nowrap;
}

.ex-search svg {
    margin-right: 11px;
}

.ex-search .drop {
    margin-right: 6px;
}

.ex-body {
    display: flex;
    flex: 1;
    min-height: 0;
    background-color: #252526;
}

.tree {
    flex: 1;
    min-width: 0;
    padding-top: 6px;
    overflow: hidden;
}

.row {
    display: flex;
    align-items: center;
    height: 23px;
    white-space: nowrap;
}

.row .tri {
    width: 9px;
    margin-right: 16px;
}

.row .ico,
.cs {
    flex: none;
    margin-right: 7px;
}

.sol {
    padding-left: 16px;
}

.proj {
    padding-left: 14px;
    background-color: #3f3f46;
}

.proj b {
    font-weight: 700;
}

.lv1 {
    padding-left: 36px;
}

.lv1.noarrow {
    padding-left: 61px;
}

.lv2 {
    padding-left: 59px;
}

.lv3 {
    padding-left: 109px;
}

.lv3 .ico {
    margin-right: 9px;
}

.cs {
    width: 18px;
    color: #89d185;
    font-size: 11px;
    font-weight: 700;
    letter-spacing: -1px;
}

.ex-v {
    width: 22px;
    flex: none;
}

.ex-v .thumb {
    height: 269px;
}

.ex-h {
    width: 282px;
    padding: 0 30px 0 6px;
    background: linear-gradient(to right, #3e3e42 260px, #2d2d30 260px);
}

.ex-h .hthumb {
    width: 208px;
    margin: 0 15px 0 7px;
}

/* status bar */
.statusbar {
    display: flex;
    align-items: center;
    flex: none;
    height: 30px;
    padding: 0 17px 0 5px;
    background-color: #007acc;
    color: #eaf4fb;
}

.ready {
    flex: 1;
    margin-left: 10px;
}

.up {
    margin-right: 11px;
}

.caret {
    margin-left: 13px;
}

/* windows task bar */
.taskbar {
    display: flex;
    align-items: center;
    flex: none;
    height: 50px;
    background-color: #1b1b1b;
}

.task {
    display: flex;
    justify-content: center;
    align-items: center;
    width: 60px;
    height: 50px;
}

.task.app {
    width: 62px;
}

.task.open {
    border-bottom: 2px solid #76b9ed;
}

.vs-task {
    background-color: #4c4c4c;
}

.badge-num,
.badge-h {
    fill: #fff;
    font-family: "Liberation Sans", sans-serif;
    font-size: 14px;
    font-weight: 700;
}

.tray {
    display: flex;
    align-items: center;
    gap: 12px;
    margin-left: auto;
    padding-right: 30px;
}

.tray-up {
    margin-left: 16px;
}

.lang {
    margin-left: 3px;
    color: #ddd;
}

.clock {
    display: flex;
    flex-direction: column;
    align-items: center;
    width: 88px;
    color: #ddd;
    line-height: 23px;
}

.notif {
    margin-left: 14px;
}
```
